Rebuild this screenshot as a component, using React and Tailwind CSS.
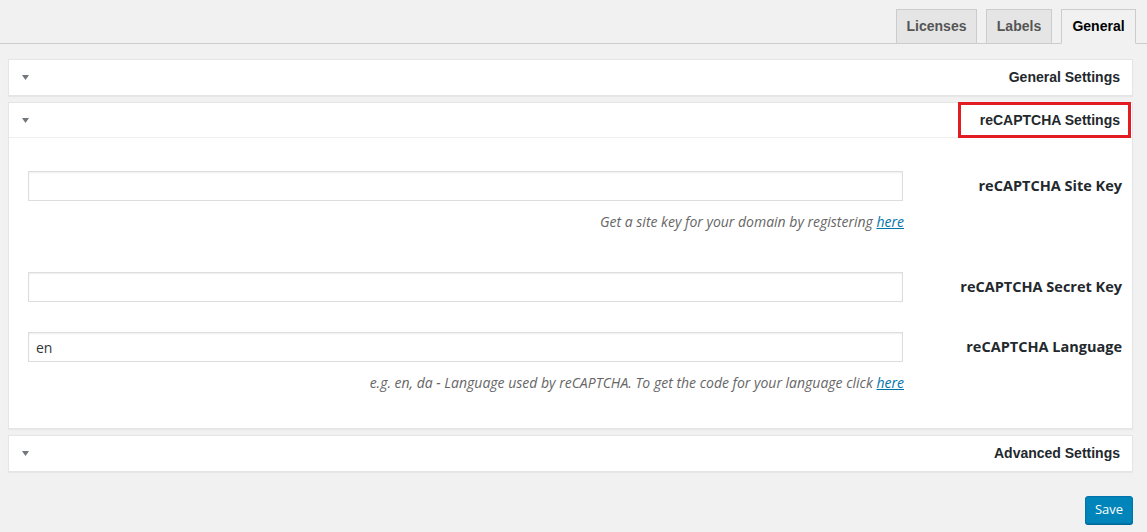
import React from "react";

const Tri = () => (
  <svg width="7" height="5" viewBox="0 0 7 5" className="block">
    <path d="M0 0 L7 0 L3.5 5 Z" fill="#72777c" />
  </svg>
);

function Header({ title, highlight, border }) {
  return (
    <div className={"relative flex h-[35px] items-center justify-between pl-[13px] pr-[12px] " + (border ? "border-b border-[#eeeeee]" : "")}>
      <Tri />
      <h3 className="text-[14px] font-bold text-[#23282d] [font-family:'Liberation_Sans',Arial,sans-serif]">{title}</h3>
      {highlight && (
        <div className="pointer-events-none absolute right-[1px] top-[-1px] h-[36px] w-[173px] border-[3px] border-[#e31b23]" />
      )}
    </div>
  );
}

function Field({ label, value, desc }) {
  return (
    <div>
      <div className="flex items-center">
        <input
          readOnly
          value={value || ""}
          className="h-[30px] w-[875px] border border-[#dddddd] bg-white px-[7px] text-[14px] text-[#32373c] shadow-[inset_0_1px_2px_rgba(0,0,0,0.07)] outline-none [font-family:'Open_Sans',sans-serif]"
        />
        <label className="flex-1 pr-[10px] text-right text-[14.5px] font-bold leading-[20px] text-[#23282d] [font-family:'Open_Sans',sans-serif]">
          {label}
        </label>
      </div>
      {desc && (
        <p className="mt-[11px] w-[876px] text-right text-[14px] leading-[20px] italic text-[#666666] [font-family:'Open_Sans',sans-serif]">
          {desc} <a className="text-[#0073aa] underline">here</a>
        </p>
      )}
    </div>
  );
}

export default function App() {
  return (
    <div className="min-h-[532px] bg-[#f1f1f1] [font-family:'Open_Sans',sans-serif]">
      <div className="flex h-[44px] items-end justify-end gap-[9px] border-b border-[#cccccc] pr-[11px]">
        <div className="mb-[-1px] flex h-[35px] w-[81px] items-center justify-center border border-[#cccccc] bg-[#e5e5e5] text-[14px] font-bold text-[#555555] [font-family:'Liberation_Sans',Arial,sans-serif]">Licenses</div>
        <div className="mb-[-1px] flex h-[35px] w-[66px] items-center justify-center border border-[#cccccc] bg-[#e5e5e5] text-[14px] font-bold text-[#555555] [font-family:'Liberation_Sans',Arial,sans-serif]">Labels</div>
        <div className="mb-[-1px] flex h-[35px] w-[75px] items-center justify-center border border-b-[#f1f1f1] border-[#cccccc] bg-[#f1f1f1] text-[14px] font-bold text-black [font-family:'Liberation_Sans',Arial,sans-serif]">General</div>
      </div>

      <div className="ml-[8px] mr-[14px] mt-[15px] flex flex-col gap-[6px]">
        <div className="border border-[#e5e5e5] bg-white shadow-[0_1px_1px_rgba(0,0,0,0.04)]">
          <Header title="General Settings" />
        </div>

        <div className="border border-[#e5e5e5] bg-white shadow-[0_1px_1px_rgba(0,0,0,0.04)]">
          <Header title="reCAPTCHA Settings" highlight border />
          <div className="pb-[35px] pl-[19px] pt-[33px]">
            <Field label="reCAPTCHA Site Key" desc="Get a site key for your domain by registering" />
            <div className="mt-[40px]">
              <Field label="reCAPTCHA Secret Key" />
            </div>
            <div className="mt-[30px]">
              <Field label="reCAPTCHA Language" value="en" desc="e.g. en, da - Language used by reCAPTCHA. To get the code for your language click" />
            </div>
          </div>
        </div>

        <div className="border border-[#e5e5e5] bg-white shadow-[0_1px_1px_rgba(0,0,0,0.04)]">
          <Header title="Advanced Settings" />
        </div>
      </div>

      <div className="mr-[14px] mt-[24px] flex justify-end">
        <button className="h-[28px] w-[48px] rounded-[3px] border border-[#0073aa] bg-[#0085ba] text-[13px] text-white shadow-[0_1px_0_#006799] [font-family:'Open_Sans',sans-serif]">
          Save
        </button>
      </div>
    </div>
  );
}
